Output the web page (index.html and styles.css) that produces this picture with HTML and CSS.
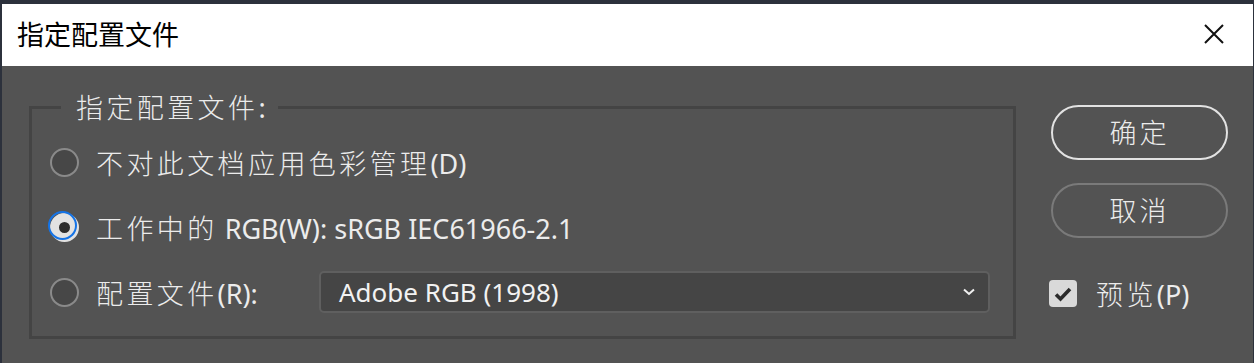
FILE: index.html
```html
<!DOCTYPE html>
<html lang="zh-CN">
<head>
  <meta charset="UTF-8" />
  <title>指定配置文件</title>
  <link rel="stylesheet" href="styles.css">
</head>
<body>
  <div class="dialog">
    <div class="titlebar">
      <span class="title">指定配置文件</span>
      <svg class="close" width="20" height="20" viewBox="0 0 20 20">
        <path d="M1 1 L19 19 M19 1 L1 19" stroke="#111" stroke-width="2" fill="none"/>
      </svg>
    </div>

    <div class="content">
      <fieldset class="group">
        <legend><span class="cjk">指定配置文件</span>:</legend>

        <div class="row">
          <span class="radio"></span>
          <span class="label"><span class="cjk">不对此文档应用色彩管理</span>(D)</span>
        </div>
        <div class="row">
          <span class="radio checked"></span>
          <span class="label"><span class="cjk">工作中的</span> RGB(W): sRGB IEC61966-2.1</span>
        </div>
        <div class="row">
          <span class="radio"></span>
          <span class="label profile-label"><span class="cjk">配置文件</span>(R):</span>
          <div class="select">
            <span>Adobe RGB (1998)</span>
            <svg width="12" height="8" viewBox="0 0 12 8">
              <path d="M1 1.5 L6 6 L11 1.5" stroke="#f0f0f0" stroke-width="2" fill="none"/>
            </svg>
          </div>
        </div>
      </fieldset>

      <div class="side">
        <button class="btn primary">确定</button>
        <button class="btn">取消</button>
        <div class="check-row">
          <span class="checkbox">
            <svg width="18" height="16" viewBox="0 0 18 16">
              <path d="M2 8.5 L6.5 13 L16 3" stroke="#2b2b2b" stroke-width="3.6" fill="none"/>
            </svg>
          </span>
          <span class="label"><span class="cjk">预览</span>(P)</span>
        </div>
      </div>
    </div>
  </div>
</body>
</html>
```

FILE: styles.css
```css
body {
  margin: 0;
  background-color: #2c313c;
  font-family: "Noto Sans", "Noto Sans CJK SC", sans-serif;
  overflow: hidden;
}
.dialog {
  margin: 4px 1px 0 2px;
  height: 359px;
  background-color: #535353;
}
.titlebar {
  height: 62px;
  background-color: #ffffff;
  display: flex;
  align-items: center;
  justify-content: space-between;
  padding: 0 29px 0 15px;
}
.title {
  font-family: "Noto Sans CJK SC", sans-serif;
  font-size: 27px;
  color: #000000;
  margin-top: -3px;
}
.close {
  margin-top: -2px;
}
.content {
  display: flex;
  padding: 25px 0 0 27px;
  color: #ececec;
}
.cjk {
  font-family: "Noto Sans CJK SC", sans-serif;
  letter-spacing: 3.4px;
  font-weight: 300;
}
.group {
  width: 987px;
  margin: 0;
  padding: 0 0 11px 18px;
  border: 3px solid #444444;
  box-sizing: border-box;
}
.group legend {
  margin-left: 11px;
  padding: 0 12px 0 15px;
  font-size: 27px;
  line-height: 32px;
}
.row {
  display: flex;
  align-items: center;
  height: 65px;
}
.row:first-of-type {
  margin-top: 6px;
}
.radio {
  width: 25px;
  height: 25px;
  border-radius: 50%;
  border: 2px solid #8a8a8a;
  background-color: #474747;
  margin-right: 17px;
  flex-shrink: 0;
}
.radio.checked {
  width: 11px;
  height: 11px;
  padding: 0;
  position: relative;
  border-width: 9px;
  border-color: #e2e2e2;
  background-color: #2d2d2d;
}
.radio.checked::after {
  content: "";
  position: absolute;
  left: -11px;
  top: -11px;
  width: 29px;
  height: 29px;
  border-radius: 50%;
  border: 2px solid #1473e6;
  box-sizing: border-box;
}
.label {
  font-size: 27px;
  white-space: nowrap;
}
.profile-label {
  width: 223px;
}
.select {
  width: 671px;
  height: 42px;
  box-sizing: border-box;
  border: 2px solid #5f5f5f;
  border-radius: 5px;
  background-color: #454545;
  display: flex;
  align-items: center;
  justify-content: space-between;
  padding: 0 13px 0 18px;
  font-size: 26px;
  color: #f2f2f2;
  margin-top: -2px;
}
.side {
  display: flex;
  flex-direction: column;
  margin-left: 35px;
  padding-top: 14px;
}
.btn {
  width: 177px;
  height: 55px;
  border-radius: 28px;
  border: 2px solid #7a7a7a;
  background: transparent;
  color: #ececec;
  font-family: "Noto Sans CJK SC", sans-serif;
  font-size: 27px;
  font-weight: 300;
  letter-spacing: 3px;
  margin-bottom: 23px;
  padding: 0 0 2px;
}
.btn.primary {
  border-color: #e2e2e2;
}
.check-row {
  display: flex;
  align-items: center;
  margin-top: 13px;
  margin-left: -2px;
}
.checkbox {
  width: 28px;
  height: 27px;
  border-radius: 4px;
  background-color: #d9d9d9;
  display: flex;
  align-items: center;
  justify-content: center;
  margin-right: 19px;
}
```
